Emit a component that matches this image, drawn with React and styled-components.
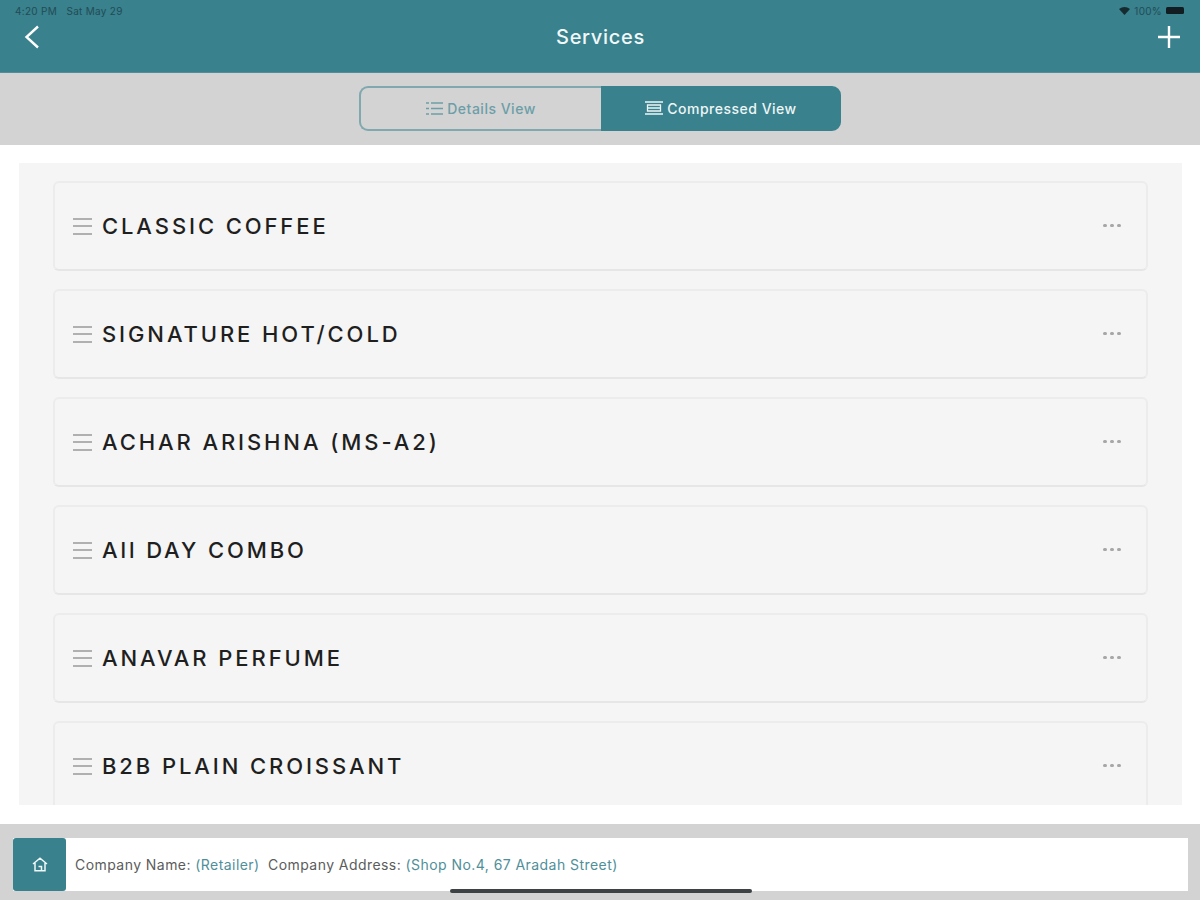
import React from 'react';
import styled, { createGlobalStyle } from 'styled-components';

const services = [
  'CLASSIC COFFEE',
  'SIGNATURE HOT/COLD',
  'ACHAR ARISHNA (MS-A2)',
  'All DAY COMBO',
  'ANAVAR PERFUME',
  'B2B PLAIN CROISSANT',
];

const GlobalStyle = createGlobalStyle`
  html, body {
    margin: 0;
    padding: 0;
    background: #fff;
  }
  body {
    font-family: "Inter", "Liberation Sans", sans-serif;
  }
  * {
    box-sizing: border-box;
  }
`;

const Page = styled.div`
  width: 1200px;
  height: 900px;
  display: flex;
  flex-direction: column;
  overflow: hidden;
  position: relative;
`;

const Header = styled.header`
  height: 73px;
  background: #38818d;
  padding-top: 5px;
  border-bottom: 1px solid #4d8f9a;
`;

const StatusBar = styled.div`
  height: 11px;
  padding: 0 16px 0 15px;
  display: flex;
  justify-content: space-between;
  align-items: center;
  font-size: 10px;
  letter-spacing: 0.3px;
  color: #234c55;
`;

const StatusRight = styled.div`
  display: flex;
  align-items: center;
  gap: 4px;
`;

const Battery = styled.span`
  width: 18px;
  height: 7px;
  border-radius: 1.5px;
  background: #111d22;
`;

const NavRow = styled.div`
  display: flex;
  justify-content: space-between;
  align-items: center;
  height: 41px;
  padding: 0 18px 0 19px;
`;

const NavIcon = styled.button`
  width: 26px;
  height: 26px;
  padding: 0;
  border: 0;
  background: none;
  display: flex;
  align-items: center;
  justify-content: center;
`;

const Title = styled.h1`
  margin: 0;
  font-size: 20px;
  font-weight: 500;
  color: #f2f7f8;
  letter-spacing: 0.7px;
`;

const Toolbar = styled.div`
  height: 72px;
  background: #d3d3d3;
  display: flex;
  align-items: center;
  justify-content: center;
`;

const Segment = styled.div`
  width: 482px;
  height: 45px;
  margin-bottom: 2px;
  display: flex;
`;

const SegmentTab = styled.div`
  flex: 0 0 ${(p) => (p.$active ? '240px' : '242px')};
  display: flex;
  align-items: center;
  justify-content: center;
  gap: 4px;
  font-size: 14px;
  font-weight: 500;
  letter-spacing: 0.5px;
  background: ${(p) => (p.$active ? '#38818d' : 'transparent')};
  color: ${(p) => (p.$active ? '#eef5f6' : '#6d9ea7')};
  border: 2px solid ${(p) => (p.$active ? '#38818d' : '#80a8af')};
  border-right-width: ${(p) => (p.$active ? '2px' : '0')};
  border-radius: ${(p) => (p.$active ? '0 9px 9px 0' : '9px 0 0 9px')};
`;

const Main = styled.main`
  flex: 1;
  background: #fff;
  padding: 18px 18px 19px 19px;
  min-height: 0;
`;

const Panel = styled.section`
  height: 100%;
  background: #f5f5f5;
  padding: 18px 34px 0;
  display: flex;
  flex-direction: column;
  gap: 18px;
  overflow: hidden;
`;

const Card = styled.div`
  flex: 0 0 90px;
  display: flex;
  align-items: center;
  border: 2px solid #ececec;
  border-bottom-color: #e6e6e6;
  border-radius: 6px;
  padding: 0 25px 0 18px;
`;

const Grip = styled.span`
  width: 19px;
  height: 17px;
  margin-right: 10px;
  flex: none;
  border-top: 2px solid #b0b0b0;
  border-bottom: 2px solid #b0b0b0;
  position: relative;
  &::after {
    content: '';
    position: absolute;
    left: 0;
    right: 0;
    top: 5.5px;
    height: 2px;
    background: #b0b0b0;
  }
`;

const CardName = styled.span`
  flex: 1;
  font-size: 22px;
  font-weight: 500;
  letter-spacing: 2.9px;
  color: #1f1f1f;
  white-space: nowrap;
`;

const Dots = styled.span`
  display: flex;
  gap: 3px;
  margin-bottom: 1px;
  i {
    width: 4px;
    height: 3px;
    border-radius: 1.5px;
    background: #a6a6a6;
    display: block;
  }
`;

const Footer = styled.footer`
  height: 76px;
  background: #d3d3d3;
  padding: 14px 12px 9px 13px;
`;

const CompanyBar = styled.div`
  height: 53px;
  background: #fff;
  display: flex;
  align-items: center;
`;

const HomeTile = styled.div`
  width: 53px;
  height: 53px;
  background: #38818d;
  border-radius: 3px;
  display: flex;
  align-items: center;
  justify-content: center;
`;

const CompanyText = styled.div`
  margin-left: 9px;
  font-size: 14px;
  letter-spacing: 0.44px;
  color: #5c5c5c;
  white-space: nowrap;
`;

const CompanyValue = styled.span`
  color: #4f8f9a;
  margin-right: ${(p) => (p.$spaced ? '4px' : '0')};
`;

const HomeIndicator = styled.div`
  position: absolute;
  left: 450px;
  bottom: 7px;
  width: 302px;
  height: 4px;
  border-radius: 2px;
  background: #3d4244;
`;

const App = () => {
  return (
    <Page>
      <GlobalStyle />
      <Header>
        <StatusBar>
          <span>4:20 PM &nbsp; Sat May 29</span>
          <StatusRight>
            <svg width="11" height="8" viewBox="0 0 11 8">
              <path d="M0 2 Q5.5 -2 11 2 L5.5 8 Z" fill="#152b30" />
            </svg>
            <span>100%</span>
            <Battery />
          </StatusRight>
        </StatusBar>
        <NavRow>
          <NavIcon aria-label="Back">
            <svg width="18" height="24" viewBox="0 0 18 24" fill="none" stroke="#fff" strokeWidth="2.4">
              <path d="M15 1.5 L3.5 12 L15 22.5" />
            </svg>
          </NavIcon>
          <Title>Services</Title>
          <NavIcon aria-label="Add">
            <svg width="22" height="22" viewBox="0 0 22 22" stroke="#fff" strokeWidth="2.4">
              <path d="M11 0 V22 M0 11 H22" />
            </svg>
          </NavIcon>
        </NavRow>
      </Header>
      <Toolbar>
        <Segment>
          <SegmentTab>
            <svg width="17" height="15" viewBox="0 0 17 15" stroke="#6d9ea7" strokeWidth="1.3">
              <path d="M0 2 H3 M5 2 H17 M0 7.5 H3 M5 7.5 H17 M0 13 H3 M5 13 H17" />
            </svg>
            Details View
          </SegmentTab>
          <SegmentTab $active>
            <svg width="18" height="14" viewBox="0 0 18 14" fill="none" stroke="#eef5f6" strokeWidth="1.3">
              <path d="M0 1 H18 M0 13 H18 M2.5 4 H15.5 V10 H2.5 Z M2.5 7 H15.5" />
            </svg>
            Compressed View
          </SegmentTab>
        </Segment>
      </Toolbar>
      <Main>
        <Panel>
          {services.map((name) => (
            <Card key={name}>
              <Grip />
              <CardName>{name}</CardName>
              <Dots>
                <i />
                <i />
                <i />
              </Dots>
            </Card>
          ))}
        </Panel>
      </Main>
      <Footer>
        <CompanyBar>
          <HomeTile>
            <svg width="16" height="15" viewBox="0 0 16 15" fill="none" stroke="#f1f7f8" strokeWidth="1.5">
              <path d="M1 7 L8 1.2 L15 7 M3 6 V13.8 H13 V6 M6.5 9.5 H9.5 V13.8" />
            </svg>
          </HomeTile>
          <CompanyText>
            Company Name: <CompanyValue $spaced>(Retailer)</CompanyValue> Company Address:{' '}
            <CompanyValue>(Shop No.4, 67 Aradah Street)</CompanyValue>
          </CompanyText>
        </CompanyBar>
      </Footer>
      <HomeIndicator />
    </Page>
  );
};

export default App;
